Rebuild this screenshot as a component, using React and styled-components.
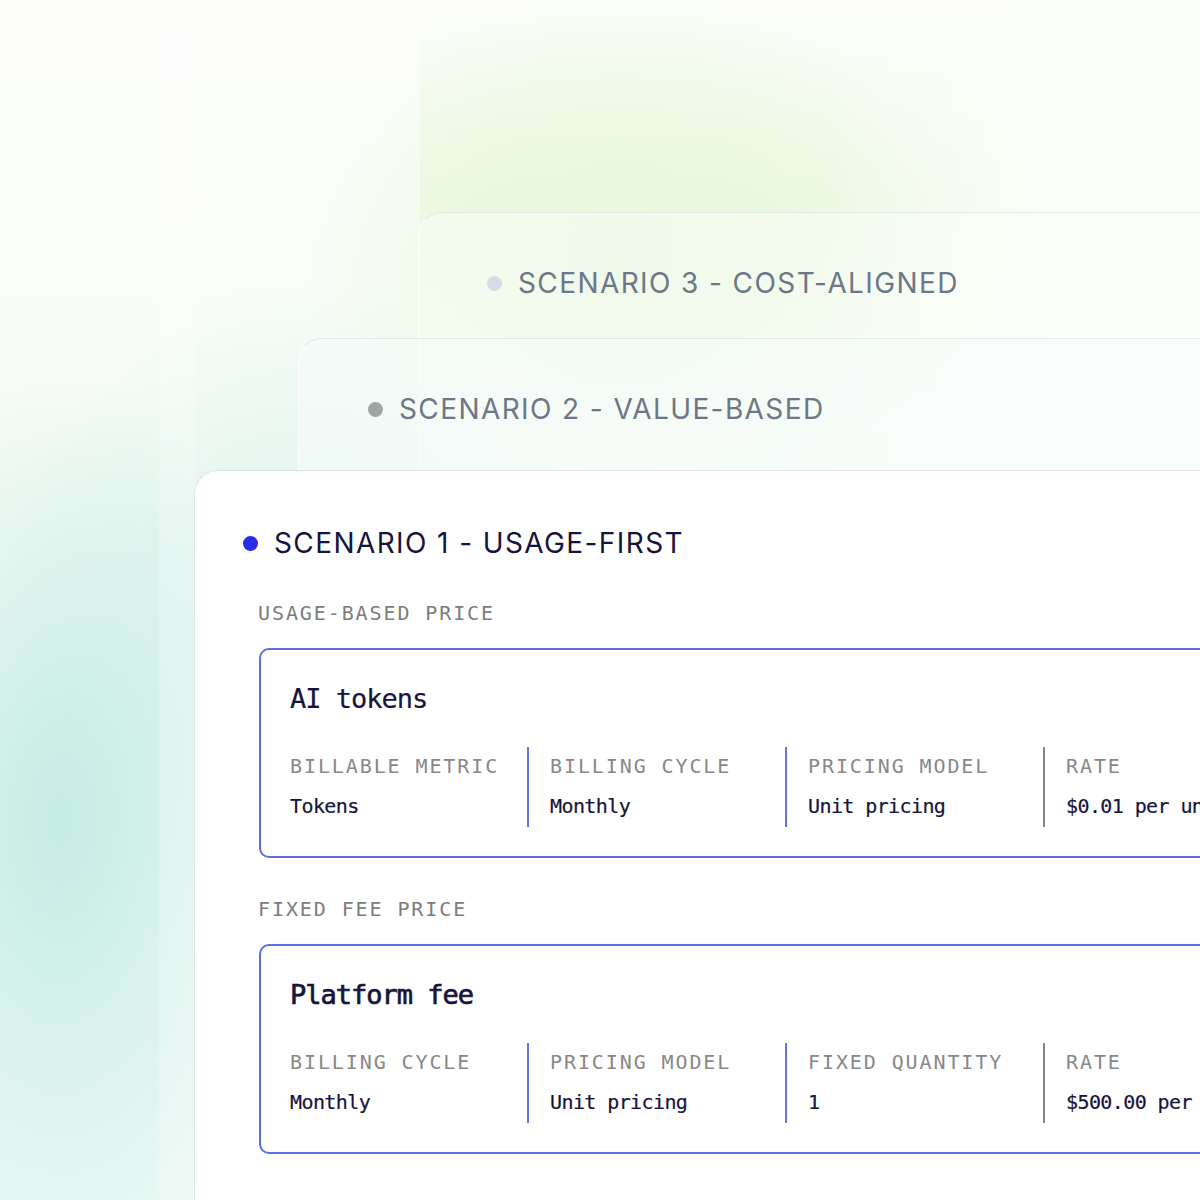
import React from 'react'
import styled, { createGlobalStyle } from 'styled-components'

const GlobalStyle = createGlobalStyle`
  * { box-sizing: border-box; }
  body {
    margin: 0;
    font-family: Inter, 'Liberation Sans', sans-serif;
  }
`

const mono = `'DejaVu Sans Mono', 'Liberation Mono', monospace`

const Page = styled.div`
  width: 1200px;
  height: 1200px;
  overflow: hidden;
  padding-top: 212px;
  background:
    linear-gradient(90deg, transparent 158px, rgba(255, 255, 255, 0.22) 160px, rgba(255, 255, 255, 0.22) 194px, transparent 196px),
    linear-gradient(90deg, rgba(252, 254, 250, 0) 820px, rgba(252, 254, 250, 0.95) 1050px) 0 0 / 1200px 480px no-repeat,
    linear-gradient(180deg, rgba(236, 248, 228, 0) 0px, rgba(232, 247, 220, 0.7) 200px, rgba(232, 247, 220, 0) 420px) 420px 0 / 780px 420px no-repeat,
    radial-gradient(ellipse 420px 380px at 620px 260px, rgba(225, 245, 210, 0.75), rgba(225, 245, 210, 0) 75%),
    radial-gradient(ellipse 300px 560px at 60px 820px, rgba(196, 236, 229, 1), rgba(196, 236, 229, 0) 80%),
    radial-gradient(ellipse 380px 420px at 300px 620px, rgba(214, 242, 236, 0.9), rgba(214, 242, 236, 0) 80%),
    linear-gradient(180deg, #fdfefc 0%, #f6fbf4 40%, #eaf8f4 100%);
`

const BackCard = styled.div`
  margin-left: ${p => p.$left}px;
  margin-top: ${p => -p.$overlap || 0}px;
  height: ${p => p.$height}px;
  padding: 52px 0 0 ${p => p.$pad}px;
  border-radius: 24px 0 0 0;
  background: ${p => p.$bg};
  border-top: 1px solid rgba(215, 228, 226, 0.7);
  border-left: 1px solid rgba(255, 255, 255, 0.6);
`

const MainCard = styled.div`
  margin-left: 194px;
  width: 1100px;
  height: 730px;
  padding: 54px 0 0 48px;
  border-radius: 24px 0 0 0;
  background: #ffffff;
  border-top: 1px solid #dde6e5;
  border-left: 1px solid #dde6e5;
`

const ScenarioRow = styled.div`
  display: flex;
  align-items: center;
  gap: 16px;
  height: 36px;
`

const Dot = styled.span`
  width: 15px;
  height: 15px;
  border-radius: 50%;
  background: ${p => p.$color};
  flex: none;
`

const ScenarioTitle = styled.span`
  font-size: 28px;
  line-height: 36px;
  letter-spacing: 1.4px;
  color: ${p => p.$color};
  white-space: nowrap;
`

const Section = styled.div`
  margin-left: 15px;
`

const SectionLabel = styled.div`
  font-family: ${mono};
  font-size: 20px;
  line-height: 24px;
  letter-spacing: 1.9px;
  color: #7d7d7d;
  margin-top: ${p => p.$top}px;
  margin-bottom: 23px;
`

const PriceBox = styled.div`
  margin-left: 1px;
  width: 1000px;
  height: 210px;
  padding: 33px 0 0 29px;
  border: 2px solid #5d6fe0;
  border-radius: 10px;
`

const PriceName = styled.div`
  font-family: ${mono};
  font-size: 27px;
  line-height: 32px;
  letter-spacing: -1px;
  -webkit-text-stroke: ${p => (p.$bold ? 0.7 : 0.2)}px currentColor;
  color: #17143c;
  margin-bottom: 32px;
`

const Fields = styled.div`
  display: flex;
`

const Field = styled.div`
  width: ${p => (p.$first ? 237 : 258)}px;
  height: 80px;
  padding: 7px 0 0 ${p => (p.$first ? 0 : 21)}px;
  border-left: ${p => (p.$first ? 'none' : `2px solid ${p.$line}`)};
  flex: none;
`

const FieldLabel = styled.div`
  font-family: ${mono};
  font-size: 20px;
  line-height: 24px;
  letter-spacing: 1.9px;
  color: #888888;
  white-space: nowrap;
`

const FieldValue = styled.div`
  font-family: ${mono};
  font-size: 20px;
  line-height: 24px;
  letter-spacing: -0.6px;
  -webkit-text-stroke: 0.2px currentColor;
  color: #17143c;
  margin-top: 16px;
  white-space: nowrap;
`

const BLUE = '#6376e3'
const GRAY = '#858585'

const prices = [
  {
    section: 'USAGE-BASED PRICE',
    top: 40,
    name: 'AI tokens',
    bold: false,
    fields: [
      ['BILLABLE METRIC', 'Tokens'],
      ['BILLING CYCLE', 'Monthly'],
      ['PRICING MODEL', 'Unit pricing'],
      ['RATE', '$0.01 per unit'],
    ],
  },
  {
    section: 'FIXED FEE PRICE',
    top: 39,
    name: 'Platform fee',
    bold: true,
    fields: [
      ['BILLING CYCLE', 'Monthly'],
      ['PRICING MODEL', 'Unit pricing'],
      ['FIXED QUANTITY', '1'],
      ['RATE', '$500.00 per month'],
    ],
  },
]

const lineColor = i => (i === 3 ? GRAY : BLUE)

const App = () => {
  return (
    <>
      <GlobalStyle />
      <Page>
        <BackCard $left={418} $height={258} $pad={68} $bg='rgba(250, 253, 248, 0.5)'>
          <ScenarioRow>
            <Dot $color='#d3dde3' />
            <ScenarioTitle $color='#6d7787'>SCENARIO 3 - COST-ALIGNED</ScenarioTitle>
          </ScenarioRow>
        </BackCard>
        <BackCard $left={298} $height={132} $overlap={132} $pad={69} $bg='rgba(246, 252, 251, 0.6)'>
          <ScenarioRow>
            <Dot $color='#9ea6a5' />
            <ScenarioTitle $color='#6d7787'>SCENARIO 2 - VALUE-BASED</ScenarioTitle>
          </ScenarioRow>
        </BackCard>
        <MainCard>
          <ScenarioRow>
            <Dot $color='#2b2be8' />
            <ScenarioTitle $color='#16133d'>SCENARIO 1 - USAGE-FIRST</ScenarioTitle>
          </ScenarioRow>
          {prices.map(p => (
            <Section key={p.name}>
              <SectionLabel $top={p.top}>{p.section}</SectionLabel>
              <PriceBox>
                <PriceName $bold={p.bold}>{p.name}</PriceName>
                <Fields>
                  {p.fields.map(([label, value], i) => (
                    <Field key={label} $first={i === 0} $line={lineColor(i)}>
                      <FieldLabel>{label}</FieldLabel>
                      <FieldValue>{value}</FieldValue>
                    </Field>
                  ))}
                </Fields>
              </PriceBox>
            </Section>
          ))}
        </MainCard>
      </Page>
    </>
  )
}

export default App
